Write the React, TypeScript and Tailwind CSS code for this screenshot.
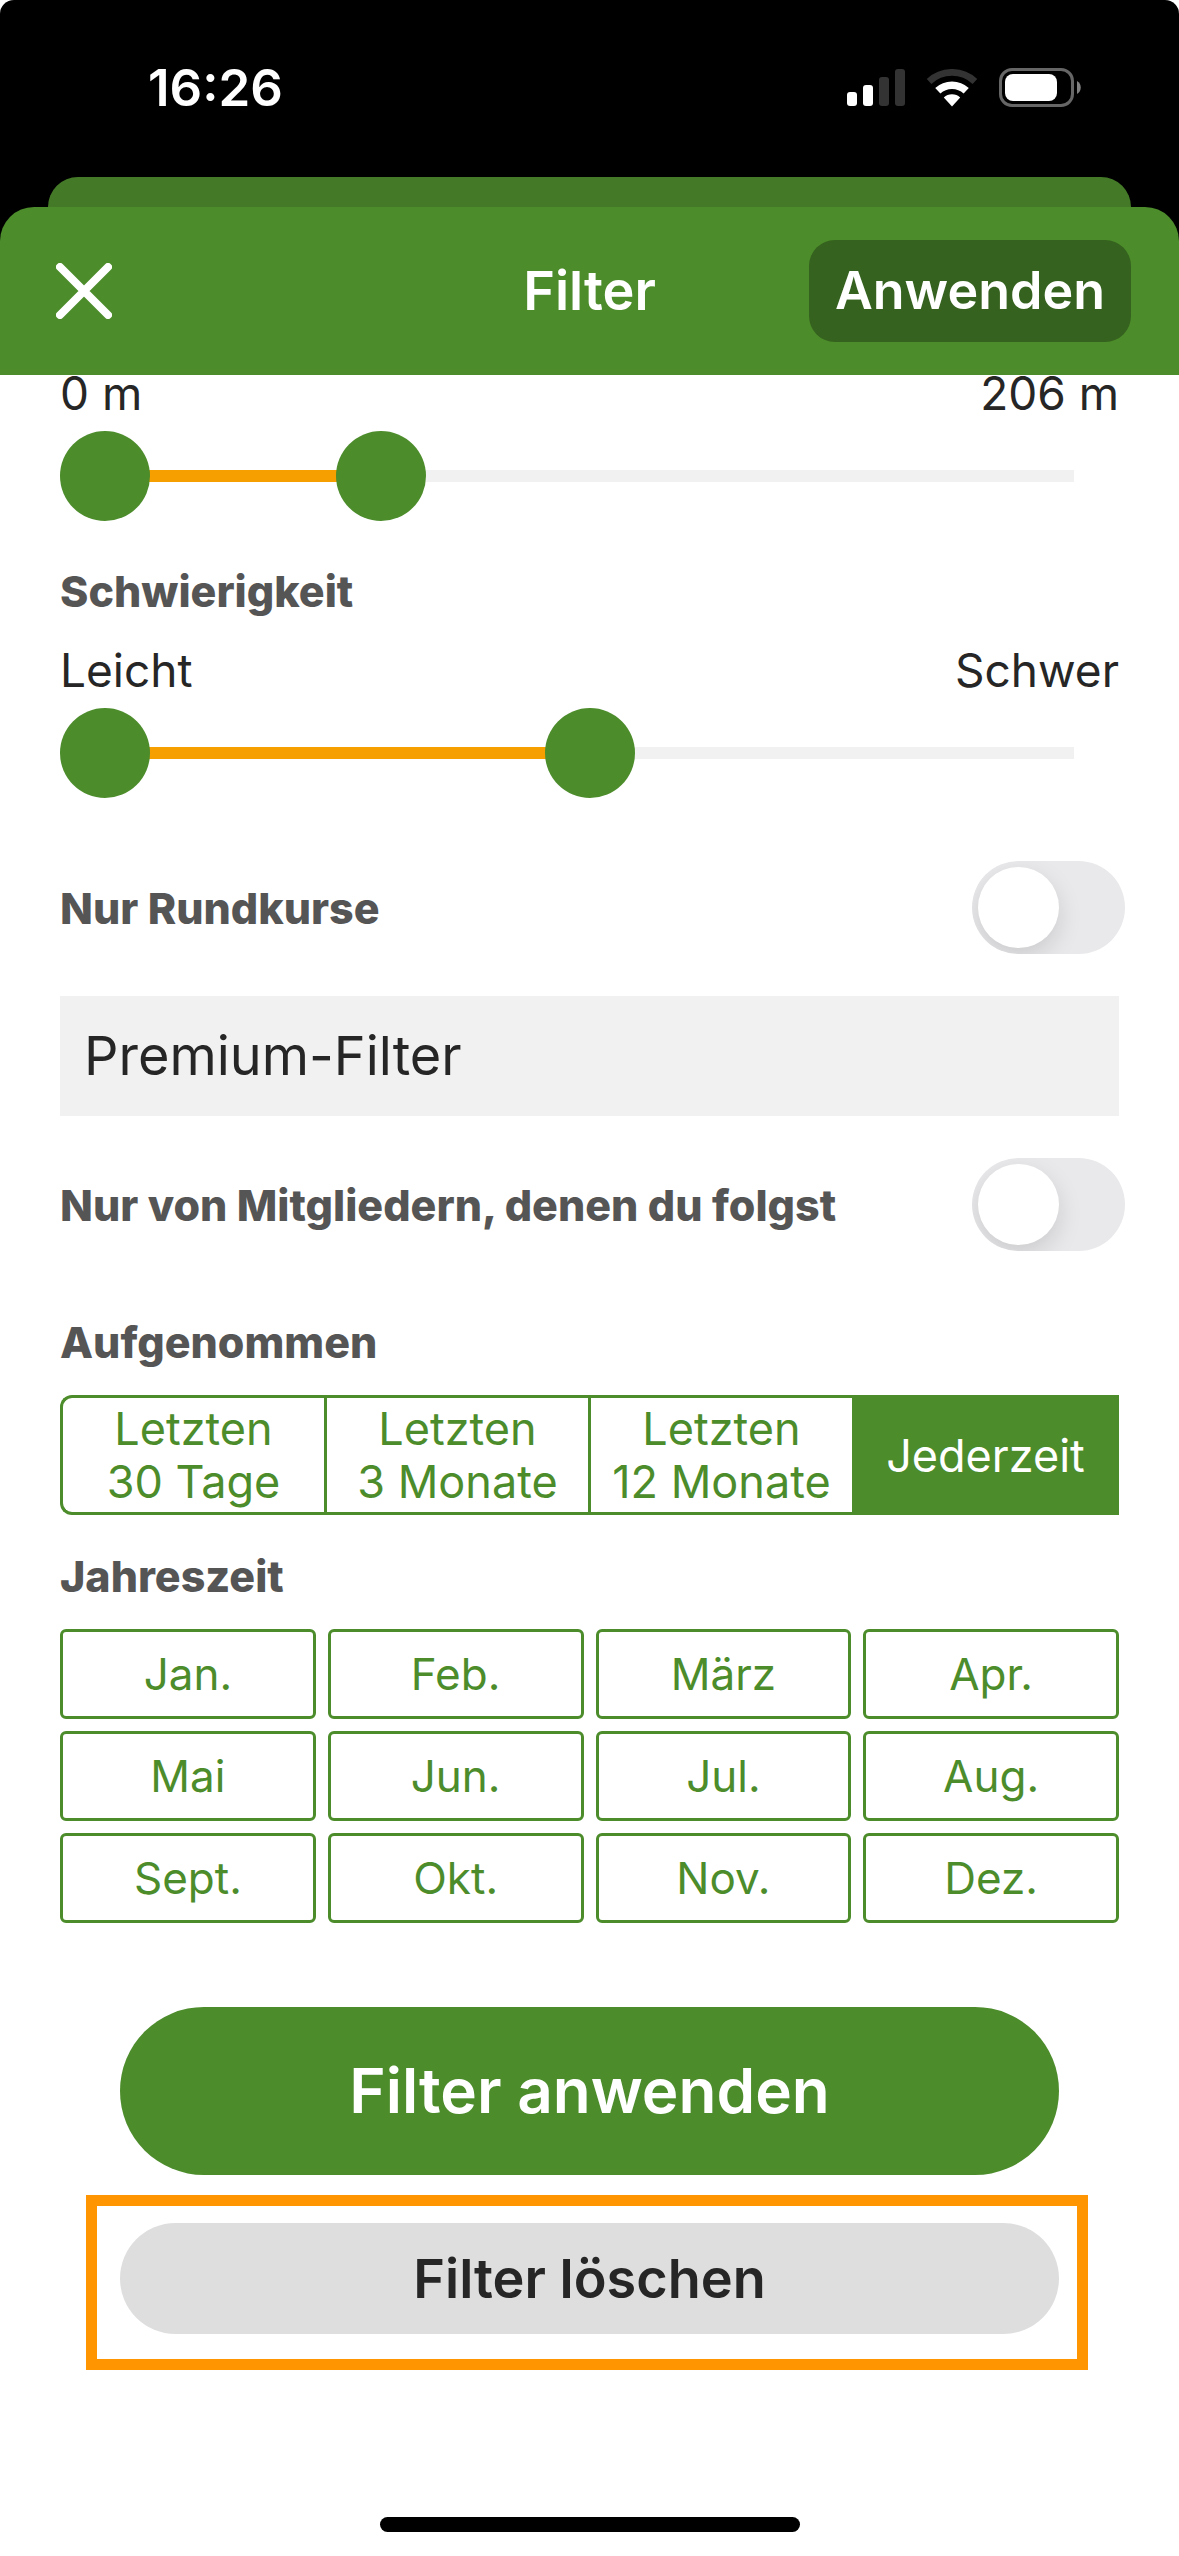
import React, { useState } from 'react';

const PERIODS = [
  ['Letzten', '30 Tage'],
  ['Letzten', '3 Monate'],
  ['Letzten', '12 Monate'],
  ['Jederzeit']
];

const MONTHS = ['Jan.', 'Feb.', 'März', 'Apr.', 'Mai', 'Jun.', 'Jul.', 'Aug.', 'Sept.', 'Okt.', 'Nov.', 'Dez.'];

const StatusBar: React.FC = () => (
  <div className="flex h-[177px] items-start justify-between pt-[62px] pr-[98px] pl-[148px]">
    <span className="text-[51px] leading-[52px] font-semibold text-white">16:26</span>
    <div className="flex items-center gap-[21px] pt-[6px]">
      <svg width="58" height="38" viewBox="0 0 58 38" fill="#fff" aria-hidden="true">
        <rect x="0" y="23" width="10" height="14" rx="3" />
        <rect x="16" y="16" width="10" height="21" rx="3" />
        <rect x="32" y="8" width="10" height="29" rx="3" fill="#333" />
        <rect x="48" y="0" width="10" height="37" rx="3" fill="#333" />
      </svg>
      <svg width="52" height="38" viewBox="0 0 52 38" fill="none" aria-hidden="true">
        <path d="M3.1 12.4A33.6 33.6 0 0 1 48.9 12.4" stroke="#333" strokeWidth="6.8" />
        <path d="M11.8 21.8A20.8 20.8 0 0 1 40.2 21.8" stroke="#fff" strokeWidth="7.6" />
        <path d="M26 37.5L17.8 28.6A12 12 0 0 1 34.2 28.6Z" fill="#fff" />
      </svg>
      <svg width="82" height="40" viewBox="0 0 82 40" fill="none" aria-hidden="true">
        <rect x="1.5" y="1.5" width="72" height="36" rx="11.5" stroke="#666" strokeWidth="3" />
        <rect x="6" y="6" width="52" height="27" rx="8" fill="#fff" />
        <path d="M78 13C83 15.5 83 23.5 78 26Z" fill="#808080" />
      </svg>
    </div>
  </div>
);

interface RangeFilterProps {
  name: string;
  max: number;
  initialTo: number;
  fromLabel: string;
  toLabel: (value: number) => string;
}

const thumbClasses =
  'pointer-events-none absolute inset-0 m-0 h-[90px] w-full appearance-none bg-transparent [&::-webkit-slider-thumb]:pointer-events-auto [&::-webkit-slider-thumb]:size-[90px] [&::-webkit-slider-thumb]:appearance-none [&::-webkit-slider-thumb]:rounded-full [&::-webkit-slider-thumb]:bg-[#4c8c2b]';

const RangeFilter: React.FC<RangeFilterProps> = ({ name, max, initialTo, fromLabel, toLabel }) => {
  const [from, setFrom] = useState(0);
  const [to, setTo] = useState(initialTo);

  return (
    <div className="flex flex-col gap-5">
      <div className="flex justify-between text-[46px] leading-9 text-[#262626]">
        <span>{fromLabel}</span>
        <span>{toLabel(to)}</span>
      </div>
      <div className="relative flex h-[90px] items-center px-[45px]">
        <div className="h-3 w-full bg-[#f1f1f1]">
          <div
            className="h-full bg-[#f59f00]"
            style={{ marginLeft: `${(from / max) * 100}%`, width: `${((to - from) / max) * 100}%` }}
          />
        </div>
        <input
          type="range"
          aria-label={`${name} von`}
          min={0}
          max={max}
          value={from}
          onChange={(e) => setFrom(Math.min(Number(e.target.value), to))}
          className={thumbClasses}
        />
        <input
          type="range"
          aria-label={`${name} bis`}
          min={0}
          max={max}
          value={to}
          onChange={(e) => setTo(Math.max(Number(e.target.value), from))}
          className={thumbClasses}
        />
      </div>
    </div>
  );
};

const ToggleRow: React.FC<{ label: string }> = ({ label }) => (
  <label className="-mr-[6px] flex items-center justify-between text-[43px] leading-[48px] font-extrabold text-[#555]">
    {label}
    <input
      type="checkbox"
      role="switch"
      className="flex h-[93px] w-[153px] shrink-0 appearance-none items-center overflow-hidden rounded-full bg-[#e9e9eb] px-[6px] before:size-[81px] before:rounded-full before:bg-white before:shadow-[0_9px_24px_rgba(0,0,0,0.13)] checked:justify-end checked:bg-[#4c8c2b]"
    />
  </label>
);

const App: React.FC = () => {
  const [period, setPeriod] = useState('Jederzeit');

  return (
    <div className="flex min-h-screen flex-col bg-white font-['Inter','Liberation_Sans',sans-serif]">
      <div className="rounded-t-[14px] bg-black">
        <StatusBar />
        {/* Edge of the page lying behind the sheet */}
        <div className="mx-12 h-[30px] rounded-t-[30px] bg-[#447a27]" />
        <header className="grid h-[168px] grid-cols-[1fr_auto_1fr] items-center rounded-t-[34px] bg-[#4c8c2b] px-12 text-white">
          <button type="button" aria-label="Schließen" className="justify-self-start p-2">
            <svg width="56" height="56" viewBox="0 0 56 56" stroke="#fff" strokeWidth="8" strokeLinecap="round" aria-hidden="true">
              <path d="M4 4L52 52M52 4L4 52" />
            </svg>
          </button>
          <h1 className="text-[54px] leading-[60px] font-semibold">Filter</h1>
          <button
            type="button"
            className="h-[102px] justify-self-end rounded-[26px] bg-[#35621e] px-[26px] text-[52px] leading-[60px] font-semibold"
          >
            Anwenden
          </button>
        </header>
      </div>

      <main className="flex flex-col px-[60px]">
        <RangeFilter name="Höhenmeter" max={723} initialTo={206} fromLabel="0 m" toLabel={(value) => `${value} m`} />

        <h2 className="mt-[46px] mb-[37px] text-[43px] leading-[48px] font-extrabold text-[#555]">Schwierigkeit</h2>
        <RangeFilter name="Schwierigkeit" max={4} initialTo={2} fromLabel="Leicht" toLabel={() => 'Schwer'} />

        <div className="mt-[63px] flex flex-col gap-[42px]">
          <ToggleRow label="Nur Rundkurse" />
          <h2 className="bg-[#f1f1f1] px-6 py-[30px] text-[54px] leading-[60px] text-[#262626]">Premium-Filter</h2>
          <ToggleRow label="Nur von Mitgliedern, denen du folgst" />
        </div>

        <fieldset className="mt-[67px]">
          <legend className="mb-[29px] text-[43px] leading-[48px] font-extrabold text-[#555]">Aufgenommen</legend>
          <div className="grid h-[120px] grid-cols-4 overflow-hidden rounded-l-xl border-[3px] border-r-0 border-[#4c8c2b] text-[45px] leading-[53px] text-[#4c8c2b]">
            {PERIODS.map((lines) => {
              const value = lines.join(' ');
              return (
                <label
                  key={value}
                  className="flex flex-col items-center justify-center border-r-[3px] border-[#4c8c2b] whitespace-nowrap has-checked:bg-[#4c8c2b] has-checked:text-white"
                >
                  <input
                    type="radio"
                    name="period"
                    value={value}
                    checked={period === value}
                    onChange={() => setPeriod(value)}
                    className="sr-only"
                  />
                  {lines.map((line) => (
                    <span key={line}>{line}</span>
                  ))}
                </label>
              );
            })}
          </div>
        </fieldset>

        <fieldset className="mt-[37px]">
          <legend className="mb-[29px] text-[43px] leading-[48px] font-extrabold text-[#555]">Jahreszeit</legend>
          <div className="grid grid-cols-4 gap-3">
            {MONTHS.map((month) => (
              <label
                key={month}
                className="flex h-[90px] items-center justify-center rounded-md border-[3px] border-[#4c8c2b] text-[44px] leading-[53px] text-[#4c8c2b] has-checked:bg-[#4c8c2b] has-checked:text-white"
              >
                <input type="checkbox" name="month" value={month} className="sr-only" />
                {month}
              </label>
            ))}
          </div>
        </fieldset>

        <button
          type="button"
          className="mx-[60px] mt-[84px] h-[168px] rounded-full bg-[#4c8c2b] text-[62px] leading-[72px] font-semibold text-white"
        >
          Filter anwenden
        </button>
        <div className="mt-5 mr-[31px] ml-[26px] border-[11px] border-[#ff9500] pt-[17px] pr-[18px] pb-[25px] pl-[23px]">
          <button
            type="button"
            className="h-[111px] w-full rounded-full bg-[#dedede] text-[54px] leading-[60px] font-semibold text-[#262626]"
          >
            Filter löschen
          </button>
        </div>
      </main>

      {/* Home indicator */}
      <div className="mt-auto mb-6 h-[15px] w-[420px] self-center rounded-full bg-black" />
    </div>
  );
};

export default App;
